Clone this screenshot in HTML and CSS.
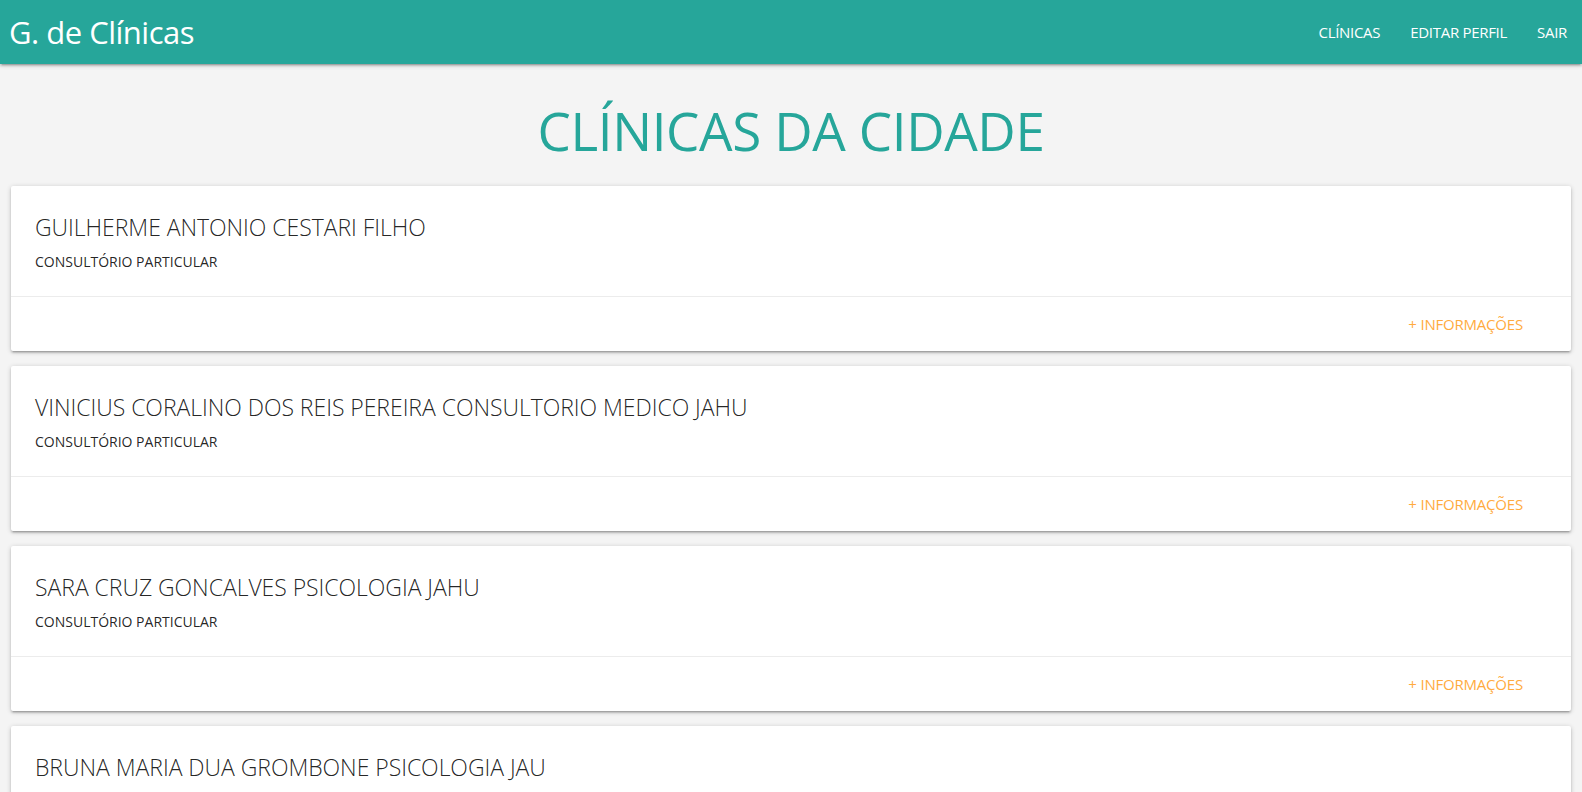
FILE: index.html
```html
<!DOCTYPE html>
<html lang="pt-BR">
<head>
<meta charset="utf-8">
<title>G. de Clínicas</title>
<link rel="stylesheet" href="styles.css">
</head>
<body>
<nav class="navbar">
  <a class="brand" href="#">G. de Clínicas</a>
  <ul class="nav-links">
    <li><a href="#">CLÍNICAS</a></li>
    <li><a href="#">EDITAR PERFIL</a></li>
    <li><a href="#">SAIR</a></li>
  </ul>
</nav>
<main class="content">
  <h2 class="page-title">CLÍNICAS DA CIDADE</h2>
  <div class="cards">
    <div class="card">
      <div class="card-content">
        <span class="card-title">GUILHERME ANTONIO CESTARI FILHO</span>
        <p class="card-sub">CONSULTÓRIO PARTICULAR</p>
      </div>
      <div class="card-action"><a href="#">+ INFORMAÇÕES</a></div>
    </div>
    <div class="card">
      <div class="card-content">
        <span class="card-title">VINICIUS CORALINO DOS REIS PEREIRA CONSULTORIO MEDICO JAHU</span>
        <p class="card-sub">CONSULTÓRIO PARTICULAR</p>
      </div>
      <div class="card-action"><a href="#">+ INFORMAÇÕES</a></div>
    </div>
    <div class="card">
      <div class="card-content">
        <span class="card-title">SARA CRUZ GONCALVES PSICOLOGIA JAHU</span>
        <p class="card-sub">CONSULTÓRIO PARTICULAR</p>
      </div>
      <div class="card-action"><a href="#">+ INFORMAÇÕES</a></div>
    </div>
    <div class="card">
      <div class="card-content">
        <span class="card-title">BRUNA MARIA DUA GROMBONE PSICOLOGIA JAU</span>
        <p class="card-sub">CONSULTÓRIO PARTICULAR</p>
      </div>
      <div class="card-action"><a href="#">+ INFORMAÇÕES</a></div>
    </div>
  </div>
</main>
</body>
</html>
```
FILE: styles.css
```css
* { box-sizing: border-box; }
html, body { margin: 0; padding: 0; }
body {
  background: #f4f4f4;
  font-family: "Open Sans", "Noto Sans", sans-serif;
  color: rgba(0,0,0,0.87);
  overflow: hidden;
}
a { text-decoration: none; }

.navbar {
  position: relative;
  z-index: 2;
  height: 64px;
  background: #26a69a;
  display: flex;
  align-items: center;
  justify-content: space-between;
  box-shadow: 0 2px 2px 0 rgba(0,0,0,0.14), 0 3px 1px -2px rgba(0,0,0,0.12), 0 1px 5px 0 rgba(0,0,0,0.2);
}
.brand {
  color: #fff;
  font-size: 31px;
  letter-spacing: -0.5px;
  padding-left: 9px;
  line-height: 64px;
}
.nav-links {
  list-style: none;
  margin: 0;
  padding: 0;
  display: flex;
}
.nav-links a {
  display: block;
  color: #fff;
  font-size: 15px;
  letter-spacing: -0.3px;
  padding: 0 15px;
  line-height: 64px;
}

.page-title {
  margin: 34px 0 22px;
  text-align: center;
  color: #26a69a;
  font-weight: 400;
  font-size: 53px;
  letter-spacing: -0.4px;
  line-height: 66px;
}

.cards {
  padding: 0 11px;
  display: flex;
  flex-direction: column;
  gap: 15px;
}
.card {
  background: #fff;
  border-radius: 2px;
  box-shadow: 0 2px 2px 0 rgba(0,0,0,0.14), 0 3px 1px -2px rgba(0,0,0,0.12), 0 1px 5px 0 rgba(0,0,0,0.2);
}
.card-content {
  padding: 25px 24px 24px;
  height: 110px;
}
.card-title {
  display: block;
  font-size: 23px;
  font-weight: 300;
  letter-spacing: -0.05px;
  line-height: 32px;
  color: rgba(0,0,0,0.87);
}
.card-sub {
  margin: 9px 0 0;
  font-size: 14px;
  letter-spacing: 0;
  line-height: 20px;
}
.card-action {
  border-top: 1px solid rgba(160,160,160,0.2);
  height: 55px;
  padding: 16px 24px;
  display: flex;
  justify-content: flex-end;
}
.card-action a {
  color: #ffab40;
  font-size: 15px;
  letter-spacing: -0.2px;
  margin-right: 24px;
  line-height: 22px;
}
```
